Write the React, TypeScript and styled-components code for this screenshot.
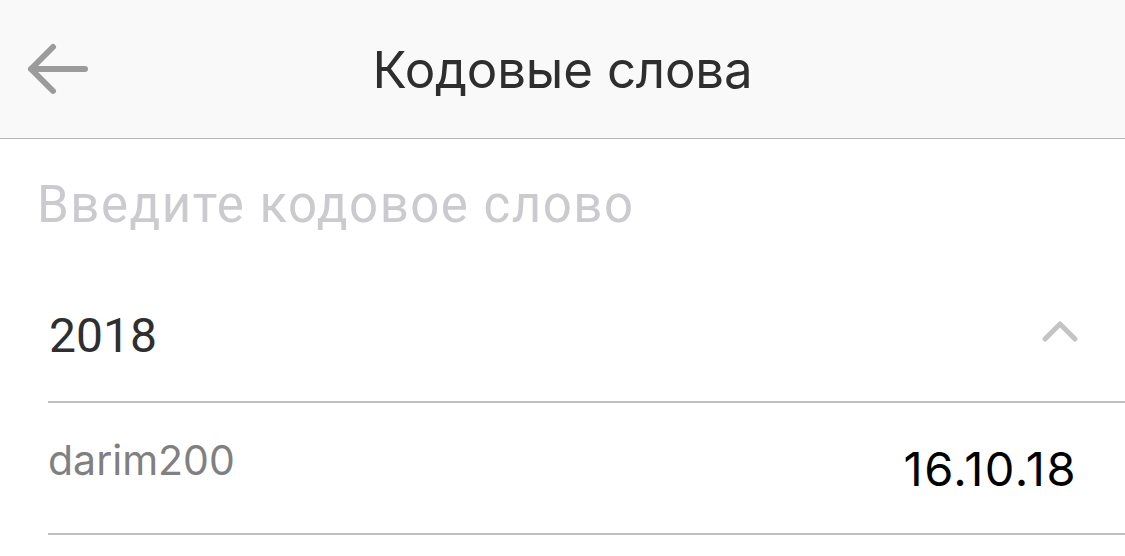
import React from 'react';
import styled, { createGlobalStyle } from 'styled-components';

const GlobalStyle = createGlobalStyle`
  html, body {
    margin: 0;
    padding: 0;
    background: #ffffff;
  }
  * {
    box-sizing: border-box;
  }
`;

const Screen = styled.div`
  width: 1125px;
  height: 556px;
  overflow: hidden;
  background: #ffffff;
  display: flex;
  flex-direction: column;
`;

const Header = styled.header`
  height: 139px;
  flex-shrink: 0;
  background: #f9f9f9;
  border-bottom: 1px solid #b7b7b7;
  display: grid;
  grid-template-columns: 120px 1fr 120px;
  align-items: center;
`;

const BackButton = styled.button`
  border: none;
  background: none;
  padding: 0 0 0 25px;
  height: 60px;
  display: flex;
  align-items: center;
  cursor: pointer;
`;

const Title = styled.h1`
  margin: 0;
  text-align: center;
  font-family: Inter, "Liberation Sans", sans-serif;
  font-weight: 400;
  font-size: 51px;
  color: #2e2e2e;
  letter-spacing: -0.2px;
`;

const SearchInput = styled.input`
  display: block;
  height: 131px;
  border: none;
  outline: none;
  padding: 0 0 0 37px;
  font-family: Roboto, "Liberation Sans", sans-serif;
  font-size: 51px;
  letter-spacing: 1.5px;
  color: #333;
  background: transparent;
  &::placeholder {
    color: #cbcbcf;
  }
`;

const YearRow = styled.div`
  height: 131px;
  display: flex;
  align-items: center;
  justify-content: space-between;
  padding: 0 47px 0 49px;
`;

const YearLabel = styled.span`
  font-family: Roboto, "Liberation Sans", sans-serif;
  font-size: 48px;
  color: #2f2f2f;
`;

const Chevron = styled.svg`
  margin-top: -10px;
`;

const List = styled.ul`
  list-style: none;
  margin: 0 0 0 48px;
  padding: 0;
  border-top: 2px solid #bfbfbf;
`;

const Item = styled.li`
  height: 132px;
  display: flex;
  align-items: center;
  justify-content: space-between;
  padding-right: 48px;
  border-bottom: 2px solid #bfbfbf;
`;

const Word = styled.span`
  font-family: Inter, "Liberation Sans", sans-serif;
  font-size: 41px;
  color: #808080;
  margin-top: -16px;
`;

const DateText = styled.span`
  font-family: Inter, "Liberation Sans", sans-serif;
  font-size: 47px;
  color: #000;
  margin-top: 0;
  letter-spacing: 1.5px;
`;

const BackIcon = () => (
  <svg width="64" height="54" viewBox="0 0 64 54" fill="none">
    <path
      d="M6 27 H60 M28 5 L6 27 L28 49"
      stroke="#9b9b9b"
      strokeWidth="6"
      strokeLinecap="round"
      strokeLinejoin="round"
    />
  </svg>
);

const ChevronUp = () => (
  <Chevron width="36" height="22" viewBox="0 0 36 22" fill="none">
    <path
      d="M3 19 L18 4 L33 19"
      stroke="#c4c4c4"
      strokeWidth="5"
      strokeLinecap="round"
      strokeLinejoin="round"
    />
  </Chevron>
);

const words = [{ word: 'darim200', date: '16.10.18' }];

export default function App() {
  return (
    <Screen>
      <GlobalStyle />
      <Header>
        <BackButton aria-label="Назад">
          <BackIcon />
        </BackButton>
        <Title>Кодовые слова</Title>
        <span />
      </Header>
      <SearchInput placeholder="Введите кодовое слово" />
      <YearRow>
        <YearLabel>2018</YearLabel>
        <ChevronUp />
      </YearRow>
      <List>
        {words.map((w) => (
          <Item key={w.word}>
            <Word>{w.word}</Word>
            <DateText>{w.date}</DateText>
          </Item>
        ))}
      </List>
    </Screen>
  );
}
